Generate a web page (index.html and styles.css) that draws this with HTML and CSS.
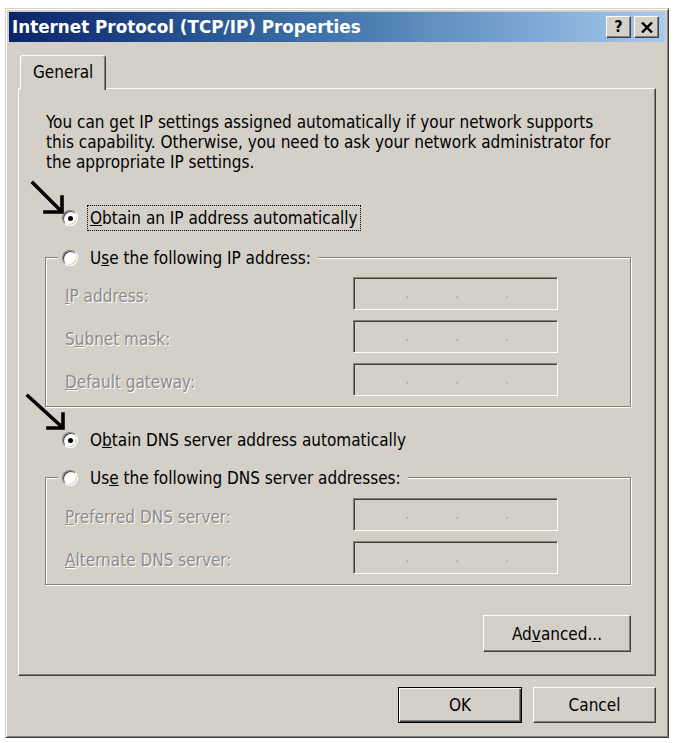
FILE: index.html
```html
<!DOCTYPE html>
<html lang="en">
<head>
<meta charset="utf-8">
<title>Internet Protocol (TCP/IP) Properties</title>
<link rel="stylesheet" href="styles.css">
</head>
<body>
<div class="window">
  <div class="titlebar">
    <span class="title">Internet Protocol (TCP/IP) Properties</span>
    <div class="title-buttons">
      <span class="tbtn help">?</span>
      <span class="tbtn close"><svg width="12" height="11" viewBox="0 0 12 11"><path d="M1 0.5 L11 10.5 M11 0.5 L1 10.5" stroke="#000" stroke-width="2.4" fill="none"/></svg></span>
    </div>
  </div>
  <div class="body">
    <div class="tabs"><div class="tab">General</div></div>
    <div class="panel">
      <p class="intro">You can get IP settings assigned automatically if your network supports<br>this capability. Otherwise, you need to ask your network administrator for<br>the appropriate IP settings.</p>

      <div class="radio-row row-first"><span class="radio checked"></span><span class="rlabel focus"><u>O</u>btain an IP address automatically</span></div>

      <div class="group group-ip">
        <div class="legend"><div class="radio-row"><span class="radio"></span><span class="rlabel">U<u>s</u>e the following IP address:</span></div></div>
        <div class="fields fields-ip">
          <span class="flabel"><u>I</u>P address:</span><span class="ipbox"><i>.</i><i>.</i><i>.</i></span>
          <span class="flabel">S<u>u</u>bnet mask:</span><span class="ipbox"><i>.</i><i>.</i><i>.</i></span>
          <span class="flabel"><u>D</u>efault gateway:</span><span class="ipbox"><i>.</i><i>.</i><i>.</i></span>
        </div>
      </div>

      <div class="radio-row row-dns"><span class="radio checked"></span><span class="rlabel">O<u>b</u>tain DNS server address automatically</span></div>

      <div class="group group-dns">
        <div class="legend"><div class="radio-row"><span class="radio"></span><span class="rlabel">Us<u>e</u> the following DNS server addresses:</span></div></div>
        <div class="fields fields-dns">
          <span class="flabel"><u>P</u>referred DNS server:</span><span class="ipbox"><i>.</i><i>.</i><i>.</i></span>
          <span class="flabel"><u>A</u>lternate DNS server:</span><span class="ipbox"><i>.</i><i>.</i><i>.</i></span>
        </div>
      </div>

      <button class="btn adv" type="button">Ad<u>v</u>anced...</button>
    </div>
    <div class="buttons">
      <button class="btn default" type="button">OK</button>
      <button class="btn cancel" type="button">Cancel</button>
    </div>
  </div>
</div>
<svg class="arrows" width="673" height="743" viewBox="0 0 673 743">
  <g stroke="#000" stroke-width="3.6" fill="none" stroke-linecap="square">
    <path d="M33 183 L61 211"/>
    <path d="M45 212 L62 212 L62 197"/>
    <path d="M28 396 L62 427"/>
    <path d="M48 428 L63 428 L63 414"/>
  </g>
</svg>
</body>
</html>
```
FILE: styles.css
```css
html, body {
  margin: 0;
  background: #ffffff;
}

body {
  font-family: "DejaVu Sans Condensed", "DejaVu Sans", sans-serif;
  font-stretch: condensed;
  font-size: 17px;
  color: #000;
}

.window {
  margin: 8px 0 0 5px;
  width: 664px;
  height: 730px;
  box-sizing: border-box;
  background: #d4d0c8;
  border: 1px solid;
  border-color: #d4d0c8 #404040 #404040 #d4d0c8;
  box-shadow: inset 1px 1px 0 #fff, inset -1px -1px 0 #808080;
  padding: 3px;
  display: flex;
  flex-direction: column;
}

/* Title bar */
.titlebar {
  height: 30px;
  flex: none;
  display: flex;
  align-items: center;
  justify-content: space-between;
  padding: 0 6px 0 3px;
  background: linear-gradient(to right, #0a246a 0%, #3a6ea5 45%, #a6caf0 100%);
}

.title {
  color: #fff;
  font-family: "DejaVu Sans", sans-serif;
  font-stretch: normal;
  font-weight: bold;
  font-size: 16.8px;
  white-space: nowrap;
}

.title-buttons {
  display: flex;
  gap: 3px;
}

.tbtn {
  width: 25px;
  height: 22px;
  box-sizing: border-box;
  display: flex;
  align-items: center;
  justify-content: center;
  background: #d4d0c8;
  border: 1px solid;
  border-color: #fff #404040 #404040 #fff;
  box-shadow: inset -1px -1px 0 #808080;
}

.tbtn.help {
  font-family: "DejaVu Sans", sans-serif;
  font-weight: bold;
  font-size: 16px;
  line-height: 1;
}

/* Body */
.body {
  flex: 1;
  display: flex;
  flex-direction: column;
  padding: 13px 9px 11px 9px;
}

.tabs {
  height: 33px;
  flex: none;
  display: flex;
}

.tab {
  position: relative;
  z-index: 1;
  margin-left: 2px;
  width: 86px;
  height: 35px;
  box-sizing: border-box;
  background: #d4d0c8;
  border-top: 1px solid #fff;
  border-left: 1px solid #fff;
  border-right: 1px solid #404040;
  box-shadow: inset -1px 0 0 #808080;
  border-radius: 3px 3px 0 0;
  padding: 5px 0 0 12px;
  line-height: 22px;
}

.panel {
  flex: 1;
  display: flex;
  flex-direction: column;
  border: 1px solid;
  border-color: #fff #404040 #404040 #fff;
  box-shadow: inset -1px -1px 0 #808080;
  padding: 23px 24px 23px 26px;
}

.intro {
  margin: 0;
  padding-left: 1px;
  line-height: 20px;
  white-space: nowrap;
}

/* Radio rows */
.radio-row {
  display: flex;
  align-items: center;
  gap: 9px;
  height: 26px;
}

.row-first {
  margin: 33px 0 0 17px;
}

.row-dns {
  margin: 20px 0 0 17px;
}

.radio {
  width: 16px;
  height: 16px;
  box-sizing: border-box;
  border-radius: 50%;
  border: 1px solid;
  border-color: #808080 #fff #fff #808080;
  box-shadow: inset 1px 1px 0 #404040, inset -1px -1px 0 #d4d0c8;
  background: #fff;
  display: flex;
  align-items: center;
  justify-content: center;
  flex: none;
}

.radio.checked::after {
  content: "";
  width: 5px;
  height: 5px;
  border-radius: 50%;
  background: #000;
}

.rlabel {
  line-height: 24px;
  padding: 0 2px;
  border: 1px dotted transparent;
  white-space: nowrap;
}

.rlabel.focus {
  border-color: #000;
}

/* Group boxes */
.group {
  border: 1px solid #808080;
  box-shadow: inset 1px 1px 0 #fff, 1px 1px 0 #fff;
  padding: 0 0 10px 19px;
}

.group-ip {
  margin-top: 26px;
}

.group-dns {
  margin-top: 24px;
}

.legend {
  width: fit-content;
  margin: -13px 0 0 -7px;
  padding: 0 4px;
  background: #d4d0c8;
}

.fields {
  display: grid;
  grid-template-columns: 288px 205px;
  grid-auto-rows: 33px;
  row-gap: 10px;
  align-items: center;
}

.fields-ip {
  margin-top: 6px;
}

.fields-dns {
  margin-top: 7px;
}

.flabel {
  color: #8c8c8c;
  text-shadow: 1px 1px 0 #fff;
  padding-top: 4px;
  white-space: nowrap;
}

.ipbox {
  height: 33px;
  box-sizing: border-box;
  border: 1px solid;
  border-color: #808080 #fff #fff #808080;
  box-shadow: inset 1px 1px 0 #404040, inset -1px -1px 0 #d4d0c8;
  background: #d4d0c8;
  display: flex;
  align-items: flex-start;
  gap: 46px;
  padding: 7px 0 0 51px;
}

.ipbox i {
  font-style: normal;
  font-size: 15px;
  line-height: 16px;
  color: #a8a8a8;
  width: 4px;
}

/* Buttons */
.btn {
  font: inherit;
  color: #000;
  background: #d4d0c8;
  border: 1px solid;
  border-color: #fff #404040 #404040 #fff;
  box-shadow: inset -1px -1px 0 #808080;
  padding: 0;
  margin: 0;
  box-sizing: border-box;
}

.adv {
  align-self: flex-end;
  margin-top: 30px;
  width: 148px;
  height: 37px;
}

.buttons {
  flex: none;
  display: flex;
  justify-content: flex-end;
  gap: 11px;
  margin-top: 11px;
}

.buttons .btn {
  height: 36px;
}

.default {
  width: 124px;
  border: 1px solid #000;
  box-shadow: inset 1px 1px 0 #fff, inset -1px -1px 0 #404040, inset -2px -2px 0 #808080;
}

.cancel {
  width: 123px;
}

/* Annotation arrows overlaid on the screenshot */
.arrows {
  position: absolute;
  left: 0;
  top: 0;
  pointer-events: none;
}
```
